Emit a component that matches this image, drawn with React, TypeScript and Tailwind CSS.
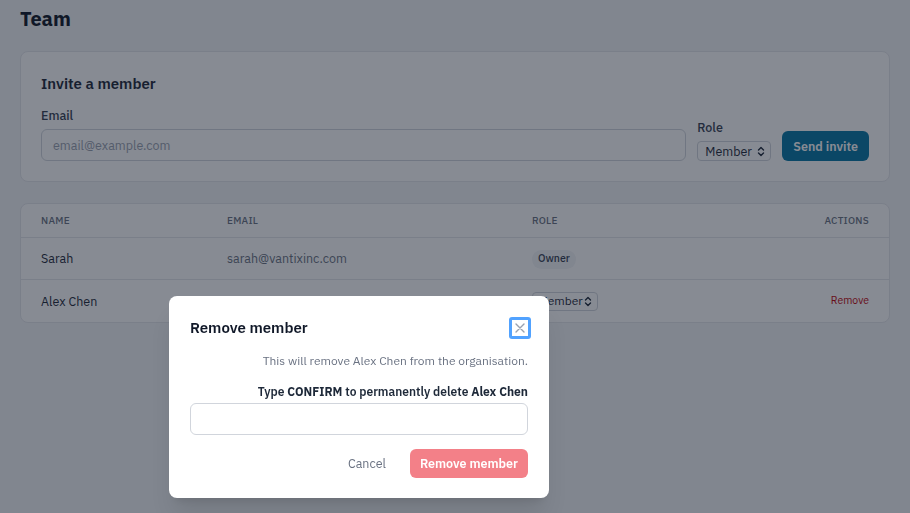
import React from "react";

function Chevrons() {
  return (
    <svg width="8" height="11" viewBox="0 0 8 11" fill="none" stroke="currentColor" strokeWidth="1.4" strokeLinecap="round" strokeLinejoin="round">
      <path d="M1.5 4 L4 1.5 L6.5 4" />
      <path d="M1.5 7 L4 9.5 L6.5 7" />
    </svg>
  );
}

export default function App() {
  return (
    <div className="relative min-h-[513px] w-full bg-gray-100 text-gray-900" style={{ fontFamily: '"IBM Plex Sans", "Noto Sans", sans-serif' }}>
      <div className="px-5 pt-[4px]">
        <h1 className="text-[20px] font-bold leading-[30px] text-gray-900">Team</h1>

        <div className="mt-[17px] rounded-lg border border-gray-200 bg-white px-5 pb-[20px] pt-[22px]">
          <h2 className="text-[15px] font-semibold leading-5 text-gray-800">Invite a member</h2>
          <div className="mt-[13px] flex items-end gap-[11px]">
            <div className="flex-1">
              <label className="block text-[12.5px] font-medium leading-4 text-gray-700">Email</label>
              <div className="mt-[6px] flex h-[32px] items-center rounded-md border border-gray-300 px-[11px] text-[12.5px] text-gray-400">
                email@example.com
              </div>
            </div>
            <div>
              <label className="block text-[12.5px] font-medium leading-4 text-gray-700">Role</label>
              <div className="mt-[6px] flex h-[20px] w-[74px] items-center justify-between rounded border border-gray-300 pl-[7px] pr-[5px] text-[12.5px] text-gray-800">
                Member <Chevrons />
              </div>
            </div>
            <button className="h-[30px] rounded-md bg-[#0676a4] px-[11px] text-[12.5px] font-semibold text-white">
              Send invite
            </button>
          </div>
        </div>

        <div className="mt-[21px] rounded-lg border border-gray-200 bg-white">
          <div className="grid h-[34px] grid-cols-[186px_305px_1fr_auto] items-center border-b border-gray-200 px-5 text-[10px] font-medium uppercase tracking-wide text-gray-500">
            <div>Name</div>
            <div>Email</div>
            <div>Role</div>
            <div className="text-right">Actions</div>
          </div>
          <div className="grid h-[42px] grid-cols-[186px_305px_1fr_auto] items-center border-b border-gray-200 px-5 text-[12.5px]">
            <div className="text-gray-800">Sarah</div>
            <div className="text-gray-500">sarah@vantixinc.com</div>
            <div>
              <span className="inline-flex h-[19px] items-center rounded-full bg-gray-100 px-[6px] text-[10.5px] font-medium text-gray-700">Owner</span>
            </div>
            <div />
          </div>
          <div className="grid h-[42px] grid-cols-[186px_305px_1fr_auto] items-center px-5 text-[12.5px]">
            <div className="text-gray-800">Alex Chen</div>
            <div />
            <div>
              <div className="flex h-[19px] w-[66px] items-center justify-between rounded border border-gray-300 pl-[5px] pr-[5px] text-[12px] text-gray-800">
                Member <Chevrons />
              </div>
            </div>
            <div className="text-right text-[10.5px] text-red-700">Remove</div>
          </div>
        </div>
      </div>

      <div className="fixed inset-0 bg-gray-900/50" />

      <div className="absolute left-[169px] top-[296px] w-[380px] rounded-lg bg-white px-[21px] pb-[20px] pt-[21px] shadow-xl">
        <div className="flex items-center justify-between">
          <h3 className="text-[15px] font-semibold leading-5 text-gray-900">Remove member</h3>
          <button className="-mr-[3px] flex h-[22px] w-[22px] items-center justify-center rounded-[3px] text-gray-400 ring-[3px] ring-inset ring-blue-400">
            <svg width="12" height="12" viewBox="0 0 12 12" stroke="currentColor" strokeWidth="1.4" strokeLinecap="round">
              <path d="M2 2 L10 10 M10 2 L2 10" />
            </svg>
          </button>
        </div>
        <p className="mt-[14px] text-right text-[12px] leading-4 text-gray-500">
          This will remove Alex Chen from the organisation.
        </p>
        <p className="mt-[15px] text-right text-[12px] font-semibold leading-4 text-gray-800">
          Type <span className="font-bold">CONFIRM</span> to permanently delete <span className="font-bold">Alex Chen</span>
        </p>
        <div className="mt-[3px] h-[32px] rounded-md border border-gray-300" />
        <div className="mt-[14px] flex items-center justify-end gap-[24px]">
          <button className="text-[12.5px] text-gray-500">Cancel</button>
          <button className="h-[29px] rounded-md bg-[#f38088] px-[10px] text-[12.5px] font-semibold text-white">Remove member</button>
        </div>
      </div>
    </div>
  );
}
